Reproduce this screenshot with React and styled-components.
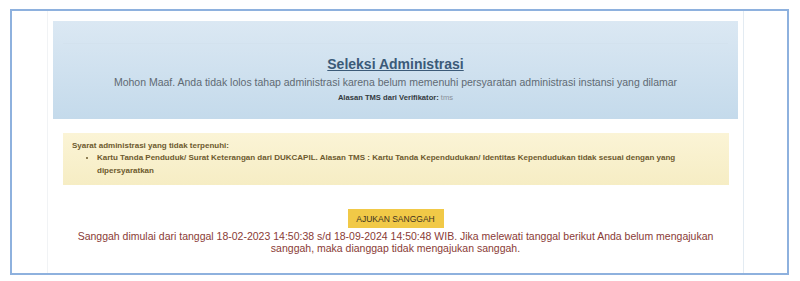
import styled, { createGlobalStyle } from "styled-components";

const GlobalStyle = createGlobalStyle`
    html, body{
        margin: 0;
        padding: 0;
        background: #ffffff;
        font-family: "Liberation Sans", Arial, sans-serif;
    }
`;

export default function App(){
    const reason = "Kartu Tanda Penduduk/ Surat Keterangan dari DUKCAPIL. Alasan TMS : Kartu Tanda Kependudukan/ Identitas Kependudukan tidak sesuai dengan yang dipersyaratkan";
    return(
        <>
            <GlobalStyle />
            <Frame>
                <Panel>
                    <InfoBox>
                        <Divider />
                        <Title>Seleksi Administrasi</Title>
                        <Subtitle>Mohon Maaf. Anda tidak lolos tahap administrasi karena belum memenuhi persyaratan administrasi instansi yang dilamar</Subtitle>
                        <Reason><b>Alasan TMS dari Verifikator:</b> tms</Reason>
                    </InfoBox>

                    <WarnBox>
                        <WarnTitle>Syarat administrasi yang tidak terpenuhi:</WarnTitle>
                        <WarnList>
                            <li>{reason}</li>
                        </WarnList>
                    </WarnBox>

                    <Sanggah>
                        <SanggahButton>AJUKAN SANGGAH</SanggahButton>
                        <Notice>Sanggah dimulai dari tanggal 18-02-2023 14:50:38 s/d 18-09-2024 14:50:48 WIB. Jika melewati tanggal berikut Anda belum mengajukan sanggah, maka dianggap tidak mengajukan sanggah.</Notice>
                    </Sanggah>
                </Panel>
            </Frame>
        </>
    );
}

const Frame = styled.div`
    margin: 9px 11px 0 10px;
    width: 779px;
    height: 266px;
    box-sizing: border-box;
    border: 2px solid #8eb1de;
    padding: 0 43px 0 35px;
    display: flex;
`;

const Panel = styled.div`
    flex: 1;
    border-left: 1px solid #f1f3f5;
    border-right: 1px solid #e3ebf2;
    padding: 10px 5px 0 5px;
    display: flex;
    flex-direction: column;
`;

const InfoBox = styled.div`
    height: 98px;
    box-sizing: border-box;
    background: linear-gradient(to bottom, #dbe8f3, #c4daeb);
    display: flex;
    flex-direction: column;
    align-items: center;
    padding-top: 22px;
    position: relative;
`;

const Divider = styled.div`
    position: absolute;
    top: 22px;
    left: 10px;
    right: 10px;
    border-top: 1px solid #d3e2ee;
`;

const Title = styled.div`
    margin-top: 13px;
    font-size: 14px;
    font-weight: 700;
    color: #3b5a78;
    text-decoration: underline;
`;

const Subtitle = styled.div`
    margin-top: 4px;
    font-size: 10.5px;
    color: #606a73;
`;

const Reason = styled.div`
    margin-top: 5px;
    font-size: 7.6px;
    color: #8a9098;
    b{
        color: #333a40;
    }
`;

const WarnBox = styled.div`
    margin: 14px 9px 0 10px;
    height: 52px;
    box-sizing: border-box;
    background: linear-gradient(to bottom, #fbf4d6, #f6edc4);
    padding: 8px 40px 0 9px;
    font-size: 8px;
    font-weight: 700;
    color: #6d5a2e;
`;

const WarnTitle = styled.div`
    line-height: 10px;
`;

const WarnList = styled.ul`
    margin: 1px 0 0 0;
    padding-left: 25px;
    line-height: 12.5px;
`;

const Sanggah = styled.div`
    margin-top: 24px;
    display: flex;
    flex-direction: column;
    align-items: center;
`;

const SanggahButton = styled.div`
    width: 96px;
    height: 19px;
    background: #f1c947;
    color: #3d3222;
    font-size: 8.5px;
    display: flex;
    align-items: center;
    justify-content: center;
`;

const Notice = styled.div`
    margin-top: 2px;
    width: 650px;
    text-align: center;
    font-size: 10.5px;
    line-height: 12px;
    color: #8a3b36;
`;
